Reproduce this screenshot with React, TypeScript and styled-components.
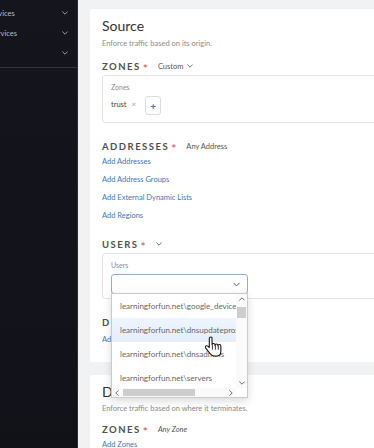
import React from 'react'
import styled, { createGlobalStyle } from 'styled-components'

const GlobalStyle = createGlobalStyle`
	html, body {
		margin: 0;
		padding: 0;
		overflow: hidden;
		background: #f1f2f4;
	}
	body {
		font-family: Lato, 'Noto Sans', sans-serif;
	}
	* {
		box-sizing: border-box;
	}
`

const Chevron = ({ dir = 'down', size = 6, color = '#666' }: { dir?: string; size?: number; color?: string }) => {
	const points: Record<string, string> = {
		down: '1,3 5,7 9,3',
		up: '1,7 5,3 9,7',
		left: '7,1 3,5 7,9',
		right: '3,1 7,5 3,9',
	}
	return (
		<svg width={size} height={size} viewBox="0 0 10 10">
			<polyline points={points[dir]} fill="none" stroke={color} strokeWidth="1.4" strokeLinecap="round" />
		</svg>
	)
}

const HandCursor = () => (
	<svg width="17" height="21" viewBox="0 0 16 20">
		<path
			d="M5.5 1c-.8 0-1.5.7-1.5 1.5V11l-1.3-1.3c-.6-.6-1.6-.6-2.1 0-.5.5-.5 1.3 0 1.9L4.5 16.5C5.5 18 6.8 19 8.5 19H11c2.5 0 4-2 4-4.5V9.5c0-.8-.6-1.4-1.4-1.4-.8 0-1.4.6-1.4 1.4V9c0-.8-.6-1.4-1.4-1.4-.8 0-1.4.6-1.4 1.4v-.5c0-.8-.6-1.4-1.4-1.4-.8 0-1.4.6-1.4 1.4V2.5C7 1.7 6.3 1 5.5 1z"
			fill="#fff"
			stroke="#111"
			strokeWidth="1"
			strokeLinejoin="round"
		/>
		<path d="M7 9v4M9.8 9v4M12.6 9.6v3.4" stroke="#111" strokeWidth="0.8" />
	</svg>
)

const Frame = styled.div`
	display: flex;
	width: 480px;
	height: 448px;
	margin-left: -55px;
`

const Sidebar = styled.nav`
	width: 133px;
	flex-shrink: 0;
	background: linear-gradient(180deg, #15161d 0%, #111218 100%);
	border-right: 1px solid #2c2d35;
`

const NavGroup = styled.div`
	padding: 3px 0 4px;
	border-bottom: 1px solid #34353d;
`

const NavItem = styled.div`
	height: 20px;
	display: flex;
	align-items: center;
	justify-content: space-between;
	padding: 0 9px 0 14px;
	font-size: 7.5px;
	color: #babbc2;
`

const Main = styled.main`
	flex: 1;
	padding: 9px 0 0 12px;
	display: flex;
	flex-direction: column;
	gap: 13px;
`

const Card = styled.section<{ $layer: number }>`
	position: relative;
	z-index: ${(p) => p.$layer};
	flex-shrink: 0;
	background: #fff;
	padding: 8px 12px 13px 12px;
	border-radius: 2px;
`

const Title = styled.h2`
	margin: 0;
	font-size: 14px;
	line-height: 18px;
	font-weight: 400;
	color: #333;
`

const Subtitle = styled.p<{ $gap?: number }>`
	margin: ${(p) => p.$gap ?? 4}px 0 0;
	font-size: 7.5px;
	line-height: 10px;
	color: #8a8a8a;
`

const FieldHeader = styled.div<{ $gap?: number }>`
	display: flex;
	align-items: center;
	height: 14px;
	margin-top: ${(p) => p.$gap ?? 16}px;
`

const FieldLabel = styled.span`
	font-size: 9.5px;
	letter-spacing: 1.5px;
	font-weight: 700;
	color: #505050;
`

const Required = styled.span`
	display: inline-block;
	color: #d2454a;
	font-size: 12px;
	line-height: 1;
	margin-left: 2px;
	transform: translateY(3px);
`

const Mode = styled.span`
	display: inline-flex;
	align-items: center;
	gap: 4px;
	margin-left: 10px;
	font-size: 7.5px;
	color: #555;
`

const FieldBox = styled.div<{ $bottom: number }>`
	margin-top: 2px;
	border: 1px solid #e3e4e7;
	border-radius: 3px;
	padding: 6px 0 ${(p) => p.$bottom}px 8px;
`

const BoxCaption = styled.div`
	font-size: 7px;
	line-height: 10px;
	color: #8c8c8c;
`

const ChipRow = styled.div`
	display: flex;
	align-items: center;
	height: 19px;
	margin-top: 4px;
`

const Chip = styled.span`
	display: inline-flex;
	align-items: center;
	gap: 5px;
	font-size: 7.5px;
	color: #444;
	margin-top: -3px;
`

const ChipRemove = styled.span`
	color: #a5a5a5;
	font-size: 8px;
`

const AddButton = styled.span`
	display: inline-flex;
	align-items: center;
	justify-content: center;
	width: 16px;
	height: 19px;
	margin-left: 9px;
	border: 1px solid #dcdde0;
	border-radius: 3px;
	color: #3f74c2;
	font-size: 10px;
	font-weight: 700;
`

const LinkList = styled.div<{ $gap?: number }>`
	display: flex;
	flex-direction: column;
	margin-top: ${(p) => p.$gap ?? 0}px;
`

const LinkText = styled.a`
	font-size: 7.5px;
	line-height: 18px;
	color: #4476bb;
	text-decoration: none;
`

const SelectWrap = styled.div`
	position: relative;
	width: 137px;
	height: 20px;
	margin-top: 4px;
`

const SelectBox = styled.div`
	height: 100%;
	display: flex;
	align-items: center;
	justify-content: flex-end;
	padding-right: 7px;
	border: 1px solid #8eaed6;
	border-radius: 3px;
	background: #fff;
`

const Dropdown = styled.div`
	position: absolute;
	top: 19px;
	left: 0;
	width: 137px;
	height: 105px;
	z-index: 5;
	display: grid;
	grid-template-columns: minmax(0, 1fr) 11px;
	grid-template-rows: minmax(0, 1fr) 9px;
	background: #fff;
	border: 1px solid #cacaca;
	box-shadow: 0 3px 8px rgba(0, 0, 0, 0.15);
`

const OptionList = styled.div`
	overflow: hidden;
	min-height: 0;
`

const Option = styled.div<{ $active?: boolean }>`
	height: 24px;
	display: flex;
	align-items: center;
	padding-left: 8px;
	font-size: 8px;
	color: #666;
	white-space: nowrap;
	background: ${(p) => (p.$active ? 'linear-gradient(180deg, #eef5fd 0%, #e3eefa 100%)' : 'transparent')};
`

const VScroll = styled.div`
	display: flex;
	flex-direction: column;
	align-items: center;
	min-height: 0;
	background: #fafafa;
`

const HScroll = styled.div`
	display: flex;
	align-items: center;
	background: #fafafa;
`

const ScrollArrow = styled.span`
	display: flex;
	align-items: center;
	justify-content: center;
	width: 10px;
	height: 10px;
	flex-shrink: 0;
`

const VThumb = styled.span`
	width: 9px;
	height: 11px;
	margin-top: 3px;
	background: #cdcdcd;
`

const HThumb = styled.span`
	width: 72px;
	height: 7px;
	margin-left: 1px;
	background: #cdcdcd;
`

const Spacer = styled.span`
	flex: 1;
`

const Corner = styled.div`
	background: #fff;
`

const Cursor = styled.div`
	position: absolute;
	left: 93px;
	top: 42px;
	z-index: 6;
	line-height: 0;
`

const userOptions = [
	'learningforfun.net\\google_devices',
	'learningforfun.net\\dnsupdateproxy',
	'learningforfun.net\\dnsadmins',
	'learningforfun.net\\servers',
]

export default function App() {
	return (
		<>
			<GlobalStyle />
			<Frame>
				<Sidebar>
					<NavGroup>
						<NavItem>
							<span>Security Services</span>
							<Chevron color="#b0b1b8" />
						</NavItem>
						<NavItem>
							<span>Network Services</span>
							<Chevron color="#b0b1b8" />
						</NavItem>
						<NavItem>
							<span>Objects</span>
							<Chevron color="#b0b1b8" />
						</NavItem>
					</NavGroup>
				</Sidebar>
				<Main>
					<Card $layer={2}>
						<Title>Source</Title>
						<Subtitle>Enforce traffic based on its origin.</Subtitle>
						<FieldHeader $gap={10}>
							<FieldLabel>ZONES</FieldLabel>
							<Required>*</Required>
							<Mode>
								Custom <Chevron size={6} color="#555" />
							</Mode>
						</FieldHeader>
						<FieldBox $bottom={7}>
							<BoxCaption>Zones</BoxCaption>
							<ChipRow>
								<Chip>
									trust <ChipRemove>×</ChipRemove>
								</Chip>
								<AddButton>+</AddButton>
							</ChipRow>
						</FieldBox>
						<FieldHeader>
							<FieldLabel>ADDRESSES</FieldLabel>
							<Required>*</Required>
							<Mode>Any Address</Mode>
						</FieldHeader>
						<LinkList>
							<LinkText>Add Addresses</LinkText>
							<LinkText>Add Address Groups</LinkText>
							<LinkText>Add External Dynamic Lists</LinkText>
							<LinkText>Add Regions</LinkText>
						</LinkList>
						<FieldHeader $gap={12}>
							<FieldLabel>USERS</FieldLabel>
							<Required>*</Required>
							<Mode>
								<Chevron size={6} color="#555" />
							</Mode>
						</FieldHeader>
						<FieldBox $bottom={4}>
							<BoxCaption>Users</BoxCaption>
							<SelectWrap>
								<SelectBox>
									<Chevron size={7} color="#555" />
								</SelectBox>
								<Dropdown>
									<OptionList>
										{userOptions.map((o, i) => (
											<Option key={o} $active={i === 1}>
												{o}
											</Option>
										))}
									</OptionList>
									<VScroll>
										<ScrollArrow>
											<Chevron dir="up" size={6} color="#555" />
										</ScrollArrow>
										<VThumb />
										<Spacer />
										<ScrollArrow>
											<Chevron dir="down" size={6} color="#555" />
										</ScrollArrow>
									</VScroll>
									<HScroll>
										<ScrollArrow>
											<Chevron dir="left" size={6} color="#555" />
										</ScrollArrow>
										<HThumb />
										<Spacer />
										<ScrollArrow>
											<Chevron dir="right" size={6} color="#555" />
										</ScrollArrow>
									</HScroll>
									<Corner />
									<Cursor>
										<HandCursor />
									</Cursor>
								</Dropdown>
							</SelectWrap>
						</FieldBox>
						<FieldHeader>
							<FieldLabel>DEVICES</FieldLabel>
							<Required>*</Required>
							<Mode>Any Device</Mode>
						</FieldHeader>
						<LinkList $gap={2}>
							<LinkText>Add Devices</LinkText>
						</LinkList>
					</Card>
					<Card $layer={1}>
						<Title>Destination</Title>
						<Subtitle $gap={3}>Enforce traffic based on where it terminates.</Subtitle>
						<FieldHeader $gap={8}>
							<FieldLabel>ZONES</FieldLabel>
							<Required>*</Required>
							<Mode>
								<i>Any Zone</i>
							</Mode>
						</FieldHeader>
						<LinkList>
							<LinkText>Add Zones</LinkText>
						</LinkList>
					</Card>
				</Main>
			</Frame>
		</>
	)
}
